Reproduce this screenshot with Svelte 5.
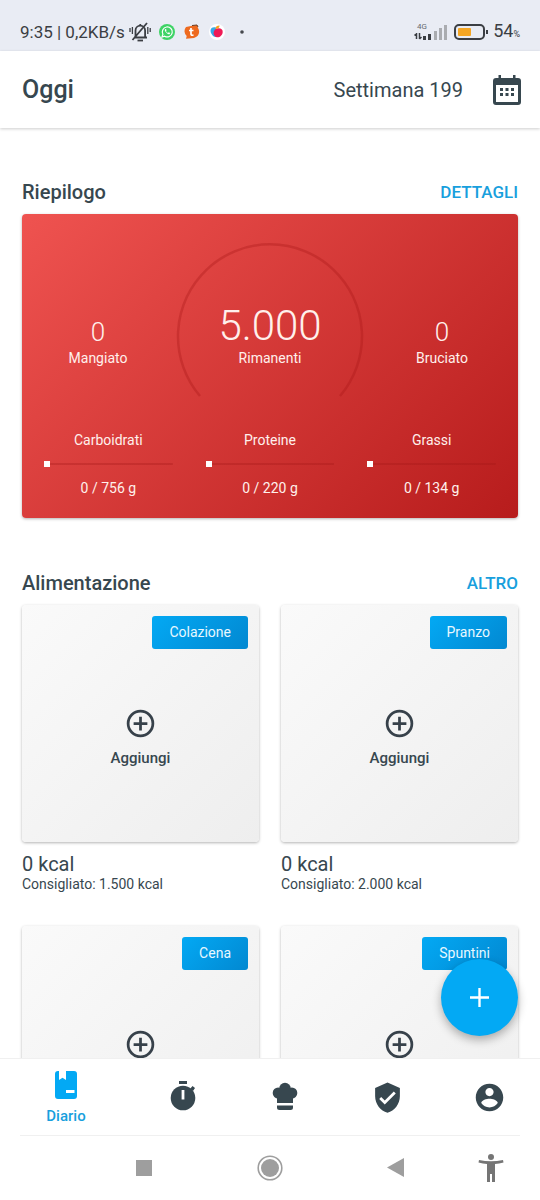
<script>
	let week = 199;
	let remaining = "5.000";
	let eaten = 0;
	let burned = 0;

	let macros = [
		{ name: "Carboidrati", value: 0, goal: 756 },
		{ name: "Proteine", value: 0, goal: 220 },
		{ name: "Grassi", value: 0, goal: 134 },
	];

	let meals = [
		{ name: "Colazione", kcal: 0, suggested: "1.500" },
		{ name: "Pranzo", kcal: 0, suggested: "2.000" },
		{ name: "Cena", kcal: 0, suggested: "1.500" },
		{ name: "Spuntini", kcal: 0, suggested: "500" },
	];
</script>

<div class="screen">
	<div class="status">
		<span class="clock">9:35 | 0,2KB/s</span>
		<svg class="bell" width="22" height="20" viewBox="0 0 22 20" fill="none" stroke="#3b3e43" stroke-width="1.8">
			<path d="M5 15.500h13M6.500 15V8.500a4.800 4.800 0 0 1 9.600 0V15M11.300 2v1.500M3.500 18L18 1" />
			<path d="M8.500 18.500h5.500" />
			<path d="M1 6v4M3.400 5v7M18.800 5v7M21.200 6v4" stroke-width="1.3" />
		</svg>
		<div class="notifs">
			<svg width="16" height="16" viewBox="0 0 16 16">
				<circle cx="8" cy="8" r="8" fill="#3fd366" />
				<path d="M3 13l.9-2.700A5 5 0 1 1 5.700 12.200z" fill="none" stroke="#fff" stroke-width="1.200" />
				<path d="M6 5.200c-.9 1.600 2 5 4.500 5.100l.7-1.300-1.500-.8-.7.7c-1-.4-1.700-1.100-2-2l.6-.7-.6-1.300z" fill="#fff" />
			</svg>
			<svg width="16" height="16" viewBox="0 0 16 16">
				<path d="M2 3l5-1 6-1 1 3a6.500 6.500 0 0 1-4 10l-8 .7.700-2.700A6.500 6.500 0 0 1 2 3z" fill="#ee6a1f" />
				<path d="M7 4v6.200q0 1.300 2.500 1M5 6.500h4.500" fill="none" stroke="#fff" stroke-width="1.700" />
				<path d="M8 1.500l5-.5 1 2" fill="none" stroke="#6b3a1e" />
			</svg>
			<svg width="16" height="16" viewBox="0 0 16 16">
				<circle cx="8" cy="8" r="8" fill="#fff" />
				<path d="M7 3.500C2 2 .5 6 2.300 9.500 3.500 12 5 13 7 13z" fill="#35a9e8" />
				<path d="M6 5.500C9 3.500 14 4 13.700 8c-.2 4-3.700 6-6.700 5-3-2-3-5-1-7.500z" fill="#ef1b57" />
				<path d="M6.500 5c0-2.500 1.500-3.500 4-3.500 0 2-1.300 3.500-4 3.500z" fill="#f6a21d" />
			</svg>
			<svg width="16" height="16" viewBox="0 0 16 16"><circle cx="8" cy="8" r="1.800" fill="#45484d" /></svg>
		</div>
		<svg class="signal" width="34" height="20" viewBox="0 0 34 20">
			<text x="3" y="7" font-size="8" fill="#666a70">4G</text>
			<path d="M2.500 11v6M.5 13.500l2-2M5.500 11v6M5.500 17l2-2" stroke="#3b3e43" stroke-width="1.500" />
			<path d="M9 14h3v4H9zM14 12h3v6h-3z" fill="#3b3e43" />
			<path d="M20 9h3v9h-3zM25 6h3v12h-3zM30 3h3v15h-3z" fill="#aaacb0" />
		</svg>
		<svg class="battery" width="34" height="16" viewBox="0 0 34 16">
			<rect x="1" y="1" width="29" height="14" rx="4" fill="none" stroke="#3b3e43" stroke-width="2" />
			<rect x="4" y="4" width="13" height="8" rx="1" fill="#f5a623" />
			<path d="M33 6v4" stroke="#3b3e43" stroke-width="2" />
		</svg>
		<span class="percent">54<small>%</small></span>
	</div>

	<header>
		<h1>Oggi</h1>
		<span class="week">Settimana {week}</span>
		<button class="calendar" aria-label="Calendario">
			<svg width="28" height="32" viewBox="0 0 28 32" fill="#37474f">
				<path d="M5.500 1h2.500v3h12V1h2.500v3H25a3 3 0 0 1 3 3v21a3 3 0 0 1-3 3H3a3 3 0 0 1-3-3V7a3 3 0 0 1 3-3h2.500zM3 11v17h22V11z" fill-rule="evenodd" />
				<path d="M7 14h3v3H7zM12.500 14h3v3h-3zM18 14h3v3h-3zM7 19h3v3H7zM12.500 19h3v3h-3zM18 19h3v3h-3z" />
			</svg>
		</button>
	</header>

	<main>
		<div class="scroll">
			<section>
				<div class="title">
					<h2>Riepilogo</h2>
					<a href="#dettagli">DETTAGLI</a>
				</div>
				<div class="summary">
					<div class="totals">
						<div class="stat">
							<span class="number">{eaten}</span>
							<span>Mangiato</span>
						</div>
						<div class="ring">
							<svg viewBox="0 0 192 166" fill="none">
								<path d="M26 158A92 92 0 1 1 166 158" stroke="#a81818" stroke-opacity="0.35" stroke-width="2.500" />
							</svg>
							<div class="stat">
								<span class="number big">{remaining}</span>
								<span>Rimanenti</span>
							</div>
						</div>
						<div class="stat">
							<span class="number">{burned}</span>
							<span>Bruciato</span>
						</div>
					</div>
					<div class="macros">
						{#each macros as macro}
							<div class="macro">
								<span>{macro.name}</span>
								<div class="track">
									<div class="bar" style="width: {(macro.value / macro.goal) * 100}%"></div>
								</div>
								<span>{macro.value} / {macro.goal} g</span>
							</div>
						{/each}
					</div>
				</div>
			</section>

			<section>
				<div class="title">
					<h2>Alimentazione</h2>
					<a href="#altro">ALTRO</a>
				</div>
				<div class="meals">
					{#each meals as meal}
						<div class="meal">
							<button class="card">
								<span class="tag">{meal.name}</span>
								<svg width="33" height="33" viewBox="0 0 24 24" fill="none" stroke="#37414a" stroke-width="2">
									<circle cx="12" cy="12" r="9" />
									<path d="M12 7v10M7 12h10" />
								</svg>
								<span class="add">Aggiungi</span>
							</button>
							<div class="kcal">{meal.kcal} kcal</div>
							<div class="suggested">Consigliato: {meal.suggested} kcal</div>
						</div>
					{/each}
				</div>
			</section>
		</div>
		<button class="fab" aria-label="Aggiungi alimento">
			<svg width="19" height="19" viewBox="0 0 20 20" stroke="#fff" stroke-width="2.500">
				<path d="M10 0v20M0 10h20" />
			</svg>
		</button>
	</main>

	<nav class="tabs">
		<a class="active" href="#diario">
			<svg width="22" height="28" viewBox="0 0 22 28">
				<path d="M3 0H4v9l3.500-2.200L11 9V0h8a3 3 0 0 1 3 3v22a3 3 0 0 1-3 3H3a3 3 0 0 1-3-3V3a3 3 0 0 1 3-3zM11 19v3h8.500v-3z" fill="#03a9f4" fill-rule="evenodd" />
			</svg>
			<span>Diario</span>
		</a>
		<a href="#digiuno" aria-label="Digiuno">
			<svg width="32" height="32" viewBox="0 0 32 32" fill="#37474f">
				<circle cx="16" cy="17" r="12.300" />
				<path d="M12 0h8v3h-8zM23 8l2.500-3 2.500 2-2 3z" />
				<path d="M14.600 9h2.800v9.500h-2.800z" fill="#fff" />
			</svg>
		</a>
		<a href="#ricette" aria-label="Ricette">
			<svg width="32" height="32" viewBox="0 0 32 32" fill="#37474f">
				<circle cx="9.200" cy="12" r="5.500" />
				<circle cx="22.800" cy="12" r="5.500" />
				<circle cx="16" cy="7.500" r="5.800" />
				<path d="M8 10h16v12H8zM8 24.500h16v2a2.500 2.500 0 0 1-2.500 2.500h-11A2.500 2.500 0 0 1 8 26.500z" />
			</svg>
		</a>
		<a href="#obiettivi" aria-label="Obiettivi">
			<svg width="33" height="33" viewBox="0 0 24 24" fill="#37474f">
				<path d="M10 17l-4-4 1.410-1.410L10 14.170l6.590-6.590L18 9M12 1L3 5v6c0 5.550 3.840 10.740 9 12 5.160-1.260 9-6.450 9-12V5z" fill-rule="evenodd" />
			</svg>
		</a>
		<a href="#profilo" aria-label="Profilo">
			<svg width="33" height="33" viewBox="0 0 24 24" fill="#37474f">
				<path d="M12 2C6.480 2 2 6.480 2 12s4.480 10 10 10 10-4.480 10-10S17.520 2 12 2zm0 3c1.660 0 3 1.340 3 3s-1.340 3-3 3-3-1.340-3-3 1.340-3 3-3zm0 14.200c-2.500 0-4.710-1.280-6-3.220.03-1.990 4-3.080 6-3.080 1.990 0 5.970 1.090 6 3.080-1.290 1.940-3.500 3.220-6 3.220z" />
			</svg>
		</a>
	</nav>

	<div class="system">
		<button aria-label="Recenti">
			<svg width="16" height="16" viewBox="0 0 16 16"><path d="M0 0h16v16H0z" fill="#9e9e9e" /></svg>
		</button>
		<button aria-label="Home">
			<svg width="26" height="26" viewBox="0 0 26 26">
				<circle cx="13" cy="13" r="11.800" fill="none" stroke="#9e9e9e" stroke-width="1.600" />
				<circle cx="13" cy="13" r="9" fill="#9e9e9e" />
			</svg>
		</button>
		<button aria-label="Indietro">
			<svg width="17" height="19" viewBox="0 0 17 19"><path d="M17 0v19L0 9.500z" fill="#9e9e9e" /></svg>
		</button>
		<button aria-label="Accessibilità">
			<svg width="26" height="28" viewBox="0 0 26 28" fill="#757575">
				<circle cx="13" cy="3" r="3" />
				<path d="M1 6q12 2.500 24 0l.5 2.500Q21 9.700 17 10v18h-3v-8h-2v8H9V10Q5 9.700.5 8.500z" />
			</svg>
		</button>
	</div>
</div>

<style>
	:global(body) {
		background: #fff;
	}
	.screen {
		display: flex;
		flex-direction: column;
		height: 100vh;
		color: #37474f;
		font-family: Roboto, "Open Sans", sans-serif;
		font-size: 14px;
		line-height: 20px;
	}
	button {
		border: 0;
		padding: 0;
		background: none;
		color: inherit;
		font: inherit;
		cursor: pointer;
	}
	a {
		text-decoration: none;
	}
	svg {
		display: block;
	}
	h1,
	h2 {
		margin: 0;
		font-weight: 500;
	}

	.status {
		display: flex;
		align-items: center;
		padding: 14px 20px 1px;
		height: 36px;
		background: #e9ecf4;
		color: #3b3e43;
	}
	.clock {
		font-size: 17px;
	}
	.bell {
		margin-left: 4px;
	}
	.notifs {
		display: flex;
		gap: 9px;
		margin-left: 8px;
	}
	.signal {
		margin-left: auto;
	}
	.battery {
		margin: 0 5px 0 6px;
	}
	.percent {
		font-size: 18px;
	}
	.percent small {
		font-size: 9px;
	}

	header {
		display: flex;
		align-items: center;
		height: 77px;
		padding: 0 19px 0 22px;
		box-shadow: 0 1px 3px rgba(0, 0, 0, 0.2);
		z-index: 1;
	}
	h1 {
		flex: 1;
		font-size: 25px;
	}
	.week {
		font-size: 20px;
	}
	.calendar {
		margin-left: 30px;
	}

	main {
		position: relative;
		flex: 1;
		min-height: 0;
	}
	.scroll {
		display: flex;
		flex-direction: column;
		gap: 53px;
		box-sizing: border-box;
		height: 100%;
		padding: 52px 22px 0;
		overflow-y: auto;
		scrollbar-width: none;
	}
	.title {
		display: flex;
		align-items: center;
		justify-content: space-between;
		height: 24px;
		margin-bottom: 10px;
	}
	h2 {
		font-size: 20px;
	}
	.title a {
		color: #189fdd;
		font-size: 17px;
		font-weight: 500;
	}

	.summary {
		padding: 24px 0 20px;
		border-radius: 4px;
		background: linear-gradient(135deg, #ef5350, #b71c1c);
		box-shadow: 0 1px 3px rgba(0, 0, 0, 0.3);
		color: #fff0ec;
	}
	.totals {
		display: grid;
		grid-template-columns: 1fr 192px 1fr;
		align-items: end;
	}
	.ring {
		display: grid;
		align-items: end;
	}
	.ring > * {
		grid-area: 1 / 1;
	}
	.stat {
		display: flex;
		flex-direction: column;
		align-items: center;
		padding-bottom: 36px;
	}
	.number {
		font-size: 26px;
		font-weight: 300;
		line-height: 32px;
	}
	.number.big {
		font-size: 42px;
		line-height: 44px;
	}
	.macros {
		display: grid;
		grid-template-columns: repeat(3, 1fr);
		gap: 33px;
		margin-top: 26px;
		padding: 0 22px;
	}
	.macro {
		text-align: center;
	}
	.track {
		display: flex;
		align-items: center;
		height: 6px;
		margin: 11px 0;
		background: linear-gradient(rgba(160, 20, 20, 0.3), rgba(160, 20, 20, 0.3)) center / 100% 2px no-repeat;
	}
	.bar {
		min-width: 6px;
		height: 6px;
		background: #fff;
	}

	.meals {
		display: grid;
		grid-template-columns: 1fr 1fr;
		gap: 33px 22px;
	}
	.card {
		position: relative;
		display: grid;
		grid-template-rows: 1fr auto 1fr;
		justify-items: center;
		width: 100%;
		aspect-ratio: 1;
		border-radius: 4px;
		background: linear-gradient(135deg, #fafafa, #eee);
		box-shadow: 0 1px 3px rgba(0, 0, 0, 0.3);
	}
	.card svg {
		grid-row: 2;
	}
	.tag {
		position: absolute;
		top: 11px;
		right: 11px;
		padding: 0 17px;
		border-radius: 3px;
		background: linear-gradient(135deg, #03a9f4, #0288d1);
		color: #e8f8ff;
		line-height: 33px;
	}
	.add {
		grid-row: 3;
		padding-top: 8px;
		font-size: 15px;
		font-weight: 500;
	}
	.kcal {
		margin-top: 11px;
		font-size: 20px;
		line-height: 22px;
	}
	.suggested {
		line-height: 18px;
	}

	.fab {
		position: absolute;
		right: 22px;
		bottom: 22px;
		display: grid;
		place-items: center;
		width: 77px;
		height: 77px;
		border-radius: 50%;
		background: #03a9f4;
		box-shadow: 0 4px 10px rgba(0, 0, 0, 0.3);
	}

	.tabs {
		display: grid;
		grid-template-columns: 22fr 17fr 17fr 17fr 17fr;
		height: 76px;
		border-top: 1px solid #f0f0f0;
	}
	.tabs a {
		display: flex;
		flex-direction: column;
		align-items: center;
		justify-content: center;
		gap: 8px;
	}
	.tabs .active {
		padding-top: 2px;
		color: #189fdd;
		font-size: 15px;
		font-weight: 500;
		line-height: 18px;
	}

	.system {
		display: grid;
		grid-template-columns: 63fr 63fr 62fr 33fr;
		height: 65px;
		padding: 0 3% 0 15%;
		background: linear-gradient(#f0f0f0, #f0f0f0) top / calc(100% - 40px) 1px no-repeat;
	}
	.system button {
		display: grid;
		place-items: center;
	}
</style>
